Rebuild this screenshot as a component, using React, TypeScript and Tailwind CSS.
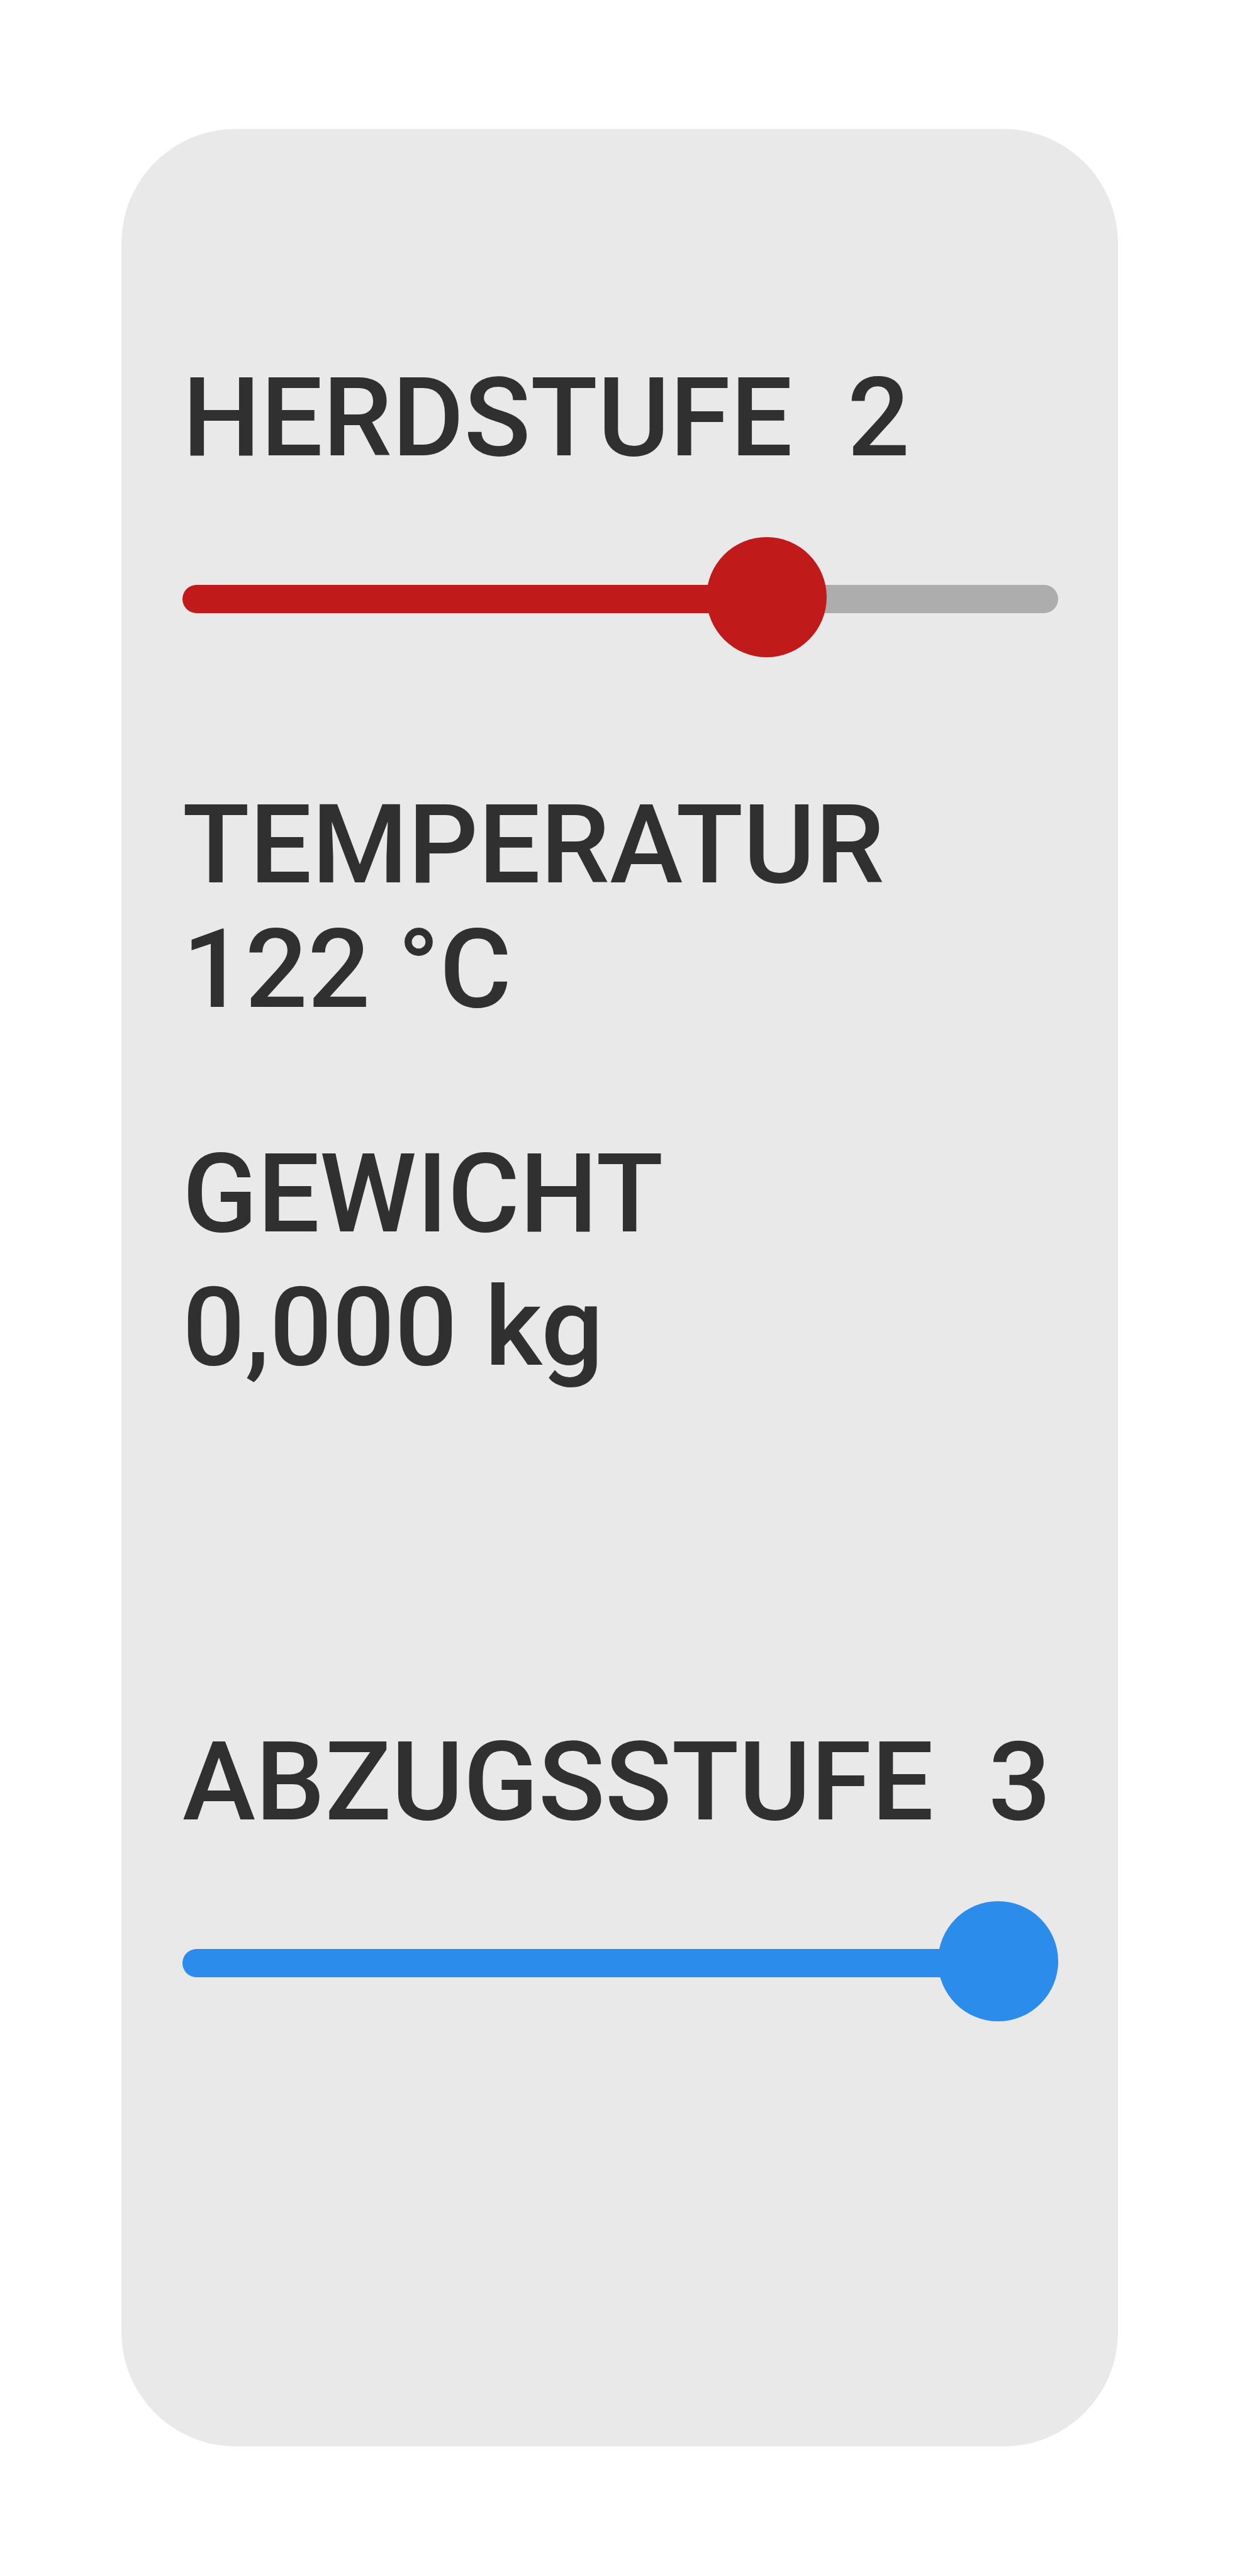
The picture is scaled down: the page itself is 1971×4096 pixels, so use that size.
import { useId, useState } from "react";

const SLIDER_BASE =
  "block h-[197px] w-full cursor-pointer appearance-none bg-transparent " +
  "[&::-webkit-slider-runnable-track]:h-[45px] [&::-webkit-slider-runnable-track]:rounded-full " +
  "[&::-webkit-slider-thumb]:-mt-[76px] [&::-webkit-slider-thumb]:size-[191px] " +
  "[&::-webkit-slider-thumb]:appearance-none [&::-webkit-slider-thumb]:rounded-full";

const TONES = {
  red:
    "[&::-webkit-slider-thumb]:bg-[#c01a1a] " +
    "[&::-webkit-slider-runnable-track]:bg-[linear-gradient(to_right,#c01a1a_var(--fill),#adadad_var(--fill))]",
  blue:
    "[&::-webkit-slider-thumb]:bg-[#2c8ceb] " +
    "[&::-webkit-slider-runnable-track]:bg-[linear-gradient(to_right,#2c8ceb_var(--fill),#adadad_var(--fill))]",
};

const MAX_LEVEL = 3;

function LevelSlider({
  label,
  initial,
  tone,
}: {
  label: string;
  initial: number;
  tone: keyof typeof TONES;
}) {
  const id = useId();
  const [level, setLevel] = useState(initial);
  return (
    <section className="flex flex-col gap-[90px]">
      <label htmlFor={id} className="whitespace-pre">
        {`${label}  ${Math.round(level)}`}
      </label>
      <input
        id={id}
        type="range"
        min={0}
        max={MAX_LEVEL}
        step={0.01}
        value={level}
        onChange={(e) => setLevel(Number(e.target.value))}
        className={`${SLIDER_BASE} ${TONES[tone]}`}
        style={{ "--fill": `${(level / MAX_LEVEL) * 100}%` } as React.CSSProperties}
      />
    </section>
  );
}

export default function App() {
  return (
    <div className="min-h-screen bg-white py-[205px] pr-[194px] pl-[193px]">
      <main className="rounded-[182px] bg-[#e9e9e9] pt-[361px] pr-[95px] pb-[670px] pl-[97px] font-['Roboto',sans-serif] text-[175px] leading-[198px] font-medium text-[#303030]">
        <LevelSlider label="HERDSTUFE" initial={2.08} tone="red" />
        <dl className="mt-[194px] mb-[525px] flex flex-col gap-[159px]">
          <div>
            <dt>TEMPERATUR</dt>
            <dd>122 °C</dd>
          </div>
          <div className="flex flex-col gap-[14px]">
            <dt>GEWICHT</dt>
            <dd>0,000 kg</dd>
          </div>
        </dl>
        <LevelSlider label="ABZUGSSTUFE" initial={3} tone="blue" />
      </main>
    </div>
  );
}
